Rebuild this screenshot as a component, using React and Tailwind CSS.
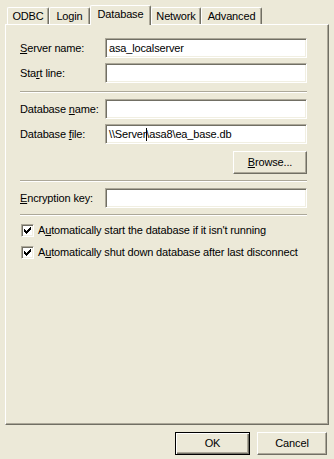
import React from 'react';

const font = { fontFamily: '"Liberation Sans", Arial, sans-serif' };

const tabs = [
    { label: 'ODBC', w: 'w-[42px]' },
    { label: 'Login', w: 'w-[41px]' },
    { label: 'Database', w: 'w-[61px]', active: true },
    { label: 'Network', w: 'w-[50px]' },
    { label: 'Advanced', w: 'w-[61px]' },
];

const Field = ({ label, children }) => (
    <div className="flex items-center h-5">
        <div className="w-[85px] text-[11px] leading-none">{label}</div>
        <div className="h-5 w-[202px] bg-white border border-t-[#ACA899] border-l-[#ACA899] border-r-white border-b-white shadow-[inset_1px_1px_0_#716F64,inset_-1px_-1px_0_#F1EFE2] flex items-center pl-[3px] text-[11px] leading-none overflow-hidden whitespace-nowrap">
            {children}
        </div>
    </div>
);

const Separator = ({ className }) => (
    <div className={`w-[287px] h-[2px] border-t border-t-[#ACA899] border-b border-b-white ${className}`} />
);

const Check = ({ children }) => (
    <div className="flex items-center h-4 ml-px">
        <div className="w-[13px] h-[13px] bg-white border border-t-[#ACA899] border-l-[#ACA899] border-r-white border-b-white shadow-[inset_1px_1px_0_#716F64,inset_-1px_-1px_0_#F1EFE2] flex items-center justify-center">
            <svg width="7" height="7" viewBox="0 0 7 7">
                <path d="M0 2h1v1h1v1h1V3h1V2h1V1h1V0h1v3H6v1H5v1H4v1H3v1H2V6H1V5H0z" fill="#000" />
            </svg>
        </div>
        <span className="ml-[4px] text-[11px] leading-none">{children}</span>
    </div>
);

const Button = ({ children, className = '', isDefault }) => (
    <div
        className={`h-[23px] bg-[#ECE9D8] flex items-center justify-center text-[11px] leading-none ${
            isDefault
                ? 'border border-black shadow-[inset_1px_1px_0_#fff,inset_-1px_-1px_0_#716F64,inset_-2px_-2px_0_#ACA899]'
                : 'border border-t-white border-l-white border-r-[#716F64] border-b-[#716F64] shadow-[inset_-1px_-1px_0_#ACA899]'
        } ${className}`}
    >
        {children}
    </div>
);

export default function App() {
    return (
        <div className="w-[334px] h-[459px] bg-[#ECE9D8] text-black flex flex-col pt-[5px] tracking-[-0.15px]" style={font}>
            <div className="flex items-end h-[19px] pl-[7px]">
                {tabs.map((t) =>
                    t.active ? (
                        <div
                            key={t.label}
                            className={`${t.w} h-[20px] -mb-px relative z-10 bg-[#ECE9D8] border-l border-t border-l-white border-t-white border-r border-r-[#716F64] shadow-[inset_-1px_0_0_#ACA899] rounded-t-[2px] flex items-start justify-center pt-[3px] text-[11px] leading-none`}
                        >
                            {t.label}
                        </div>
                    ) : (
                        <div
                            key={t.label}
                            className={`${t.w} h-[17px] bg-[#ECE9D8] border-l border-t border-l-white border-t-white border-r border-r-[#716F64] shadow-[inset_-1px_0_0_#ACA899] rounded-t-[2px] flex items-start justify-center pt-[3px] text-[11px] leading-none`}
                        >
                            {t.label}
                        </div>
                    )
                )}
            </div>
            <div className="ml-[5px] w-[324px] h-[401px] border border-t-white border-l-white border-r-[#716F64] border-b-[#716F64] shadow-[inset_-1px_-1px_0_#ACA899] pl-[14px] pt-[13px] flex flex-col">
                <Field label={<><span className="underline">S</span>erver name:</>}>asa_localserver</Field>
                <div className="mt-[5px]">
                    <Field label={<>Sta<span className="underline">r</span>t line:</>} />
                </div>
                <Separator className="mt-[8px] mb-[6px]" />
                <Field label={<>Database <span className="underline">n</span>ame:</>} />
                <div className="mt-[5px]">
                    <Field label={<>Database <span className="underline">f</span>ile:</>}>
                        \\Server<span className="inline-block w-px h-[13px] bg-black -mr-px"></span>\asa8\ea_base.db
                    </Field>
                </div>
                <div className="flex w-[287px] justify-end mt-[7px]">
                    <Button className="w-[74px]"><span className="underline">B</span>rowse...</Button>
                </div>
                <Separator className="mt-[6px] mb-[6px]" />
                <Field label={<><span className="underline">E</span>ncryption key:</>} />
                <Separator className="mt-[6px] mb-[6px]" />
                <Check>A<span className="underline">u</span>tomatically start the database if it isn't running</Check>
                <div className="mt-[6px]">
                    <Check>A<span className="underline">u</span>tomatically shut down database after last disconnect</Check>
                </div>
            </div>
            <div className="flex justify-end gap-[7px] pr-[7px] mt-[7px]">
                <Button isDefault className="w-[75px]">OK</Button>
                <Button className="w-[70px]">Cancel</Button>
            </div>
        </div>
    );
}
